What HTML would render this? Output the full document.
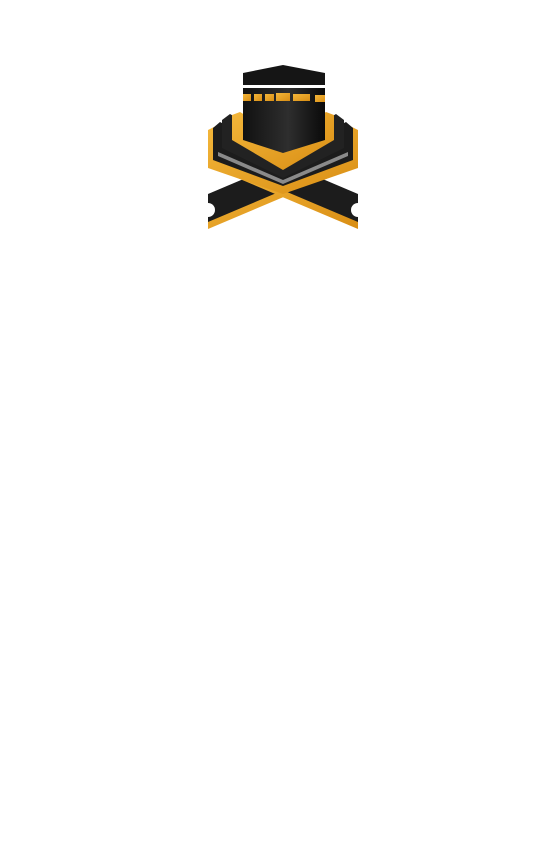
<!DOCTYPE html>
<html><head><style>html,body{margin:0;padding:0;background:#fff;width:540px;height:862px;overflow:hidden}</style></head>
<body>
<svg width="540" height="862" viewBox="0 0 540 862" style="position:absolute;left:0;top:0">
<defs>
<linearGradient id="g" x1="0" y1="0" x2="1" y2="1"><stop offset="0" stop-color="#f3b63a"/><stop offset="1" stop-color="#d98e14"/></linearGradient>
<linearGradient id="k" x1="0" y1="0" x2="1" y2="0"><stop offset="0" stop-color="#111"/><stop offset="0.55" stop-color="#2e2e2e"/><stop offset="1" stop-color="#0a0a0a"/></linearGradient>
</defs>
<!-- stand bars -->
<polygon points="208,194 300,155 345,170 208,228" fill="#1c1c1c"/>
<polygon points="208,222 345,164 345,171 208,229" fill="url(#g)"/>
<polygon points="358,194 266,155 221,170 358,228" fill="#1c1c1c"/>
<polygon points="358,222 221,164 221,171 358,229" fill="url(#g)"/>
<circle cx="208" cy="210" r="7" fill="#fff"/>
<circle cx="358" cy="210" r="7" fill="#fff"/>
<!-- book -->
<polygon points="208,130 216,126 283,160 350,126 358,130 358,168 283,194 208,168" fill="url(#g)"/>
<polygon points="213,128 220,122 283,155 346,122 353,128 353,160 283,186 213,160" fill="#1c1c1c"/>
<polygon points="218,152 283,180 348,152 348,156 283,184 218,156" fill="#8a8a8a"/>
<polygon points="222,120 230,114 283,145 336,114 344,120 344,148 283,178 222,148" fill="#222"/>
<polygon points="232,115 240,112 283,138 326,112 334,115 334,140 283,170 232,140" fill="url(#g)"/>
<!-- kaaba -->
<polygon points="243,73 283,65 325,73 325,85 243,85" fill="#151515"/>
<rect x="243" y="85" width="82" height="3" fill="#fff"/>
<polygon points="243,88 325,88 325,140 283,153 243,140" fill="url(#k)"/>
<g fill="url(#g)">
<rect x="243" y="94" width="8" height="7"/><rect x="254" y="94" width="8" height="7"/><rect x="265" y="94" width="9" height="7"/>
<rect x="276" y="93" width="14" height="8"/><rect x="293" y="94" width="17" height="7"/><rect x="315" y="95" width="10" height="7"/>
</g>
</svg>
</body></html>
